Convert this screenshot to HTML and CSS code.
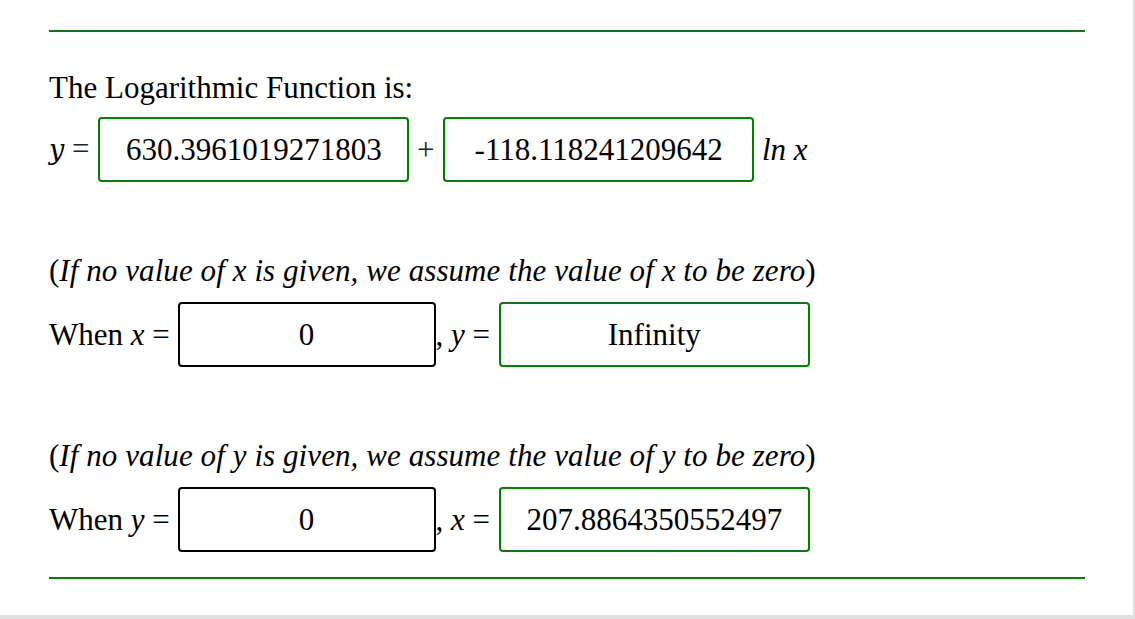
FILE: index.html
```html
<!DOCTYPE html>
<html lang="en">

<head>
  <meta charset="UTF-8">
  <meta name="viewport" content="width=device-width, initial-scale=1.0">
  <title>Logarithmic Regression</title>
  <link rel="stylesheet" href="styles.css">
</head>

<body>
  <div class="page">
    <div class="rule"></div>

    <p class="intro">The Logarithmic Function is:</p>
    <div class="row">
      <span class="label"><i class="var-y">y</i> <span class="op">=</span> </span>
      <input class="box result wide" type="text" value="630.3961019271803" readonly>
      <span class="label"> <span class="op">+</span> </span>
      <input class="box result wide" type="text" value="-118.118241209642" readonly>
      <span class="label"> <i>ln x</i></span>
    </div>

    <p class="note">(<i>If no value of x is given, we assume the value of x to be zero</i>)</p>
    <div class="row">
      <span class="label">When <i>x</i> = </span>
      <input class="box entry" type="text" value="0">
      <span class="label">, <i>y</i> = </span>
      <input class="box result wide" type="text" value="Infinity" readonly>
    </div>

    <p class="note">(<i>If no value of y is given, we assume the value of y to be zero</i>)</p>
    <div class="row">
      <span class="label">When <i>y</i> = </span>
      <input class="box entry" type="text" value="0">
      <span class="label">, <i>x</i> = </span>
      <input class="box result wide" type="text" value="207.8864350552497" readonly>
    </div>

    <div class="rule bottom"></div>
  </div>
</body>

</html>
```

FILE: styles.css
```css
* {
  margin: 0;
  padding: 0;
  box-sizing: border-box;
}

body {
  background: #e0e0e0;
  font-family: "Liberation Serif", "Times New Roman", serif;
  font-size: 31px;
  color: #000;
}

.page {
  background: #fff;
  width: 1133px;
  height: 615px;
  padding: 30px 48px 0 49px;
}

.rule {
  height: 2px;
  background: #008000;
}

.rule.bottom {
  margin-top: 25px;
}

.intro,
.note {
  line-height: 36px;
}

.intro {
  margin-top: 38px;
}

.note {
  margin-top: 71px;
}

.note i {
  letter-spacing: 0.08px;
}

.row {
  display: flex;
  align-items: center;
  height: 65px;
  margin-top: 13px;
}

.intro + .row {
  margin-top: 11px;
}

.label {
  white-space: pre;
  line-height: 36px;
}

.op {
  color: #222;
}

.var-y {
  font-family: "DejaVu Serif", serif;
  font-size: 27px;
}

.box {
  height: 65px;
  border-radius: 4px;
  border: 2px solid #000;
  background: #fff;
  font-family: "Liberation Serif", "Times New Roman", serif;
  font-size: 31px;
  color: #000;
  text-align: center;
  outline: none;
}

.box.result {
  border-color: #008000;
}

.box.wide {
  width: 311px;
  margin-left: 1px;
}

.box.entry {
  width: 258px;
}
```
